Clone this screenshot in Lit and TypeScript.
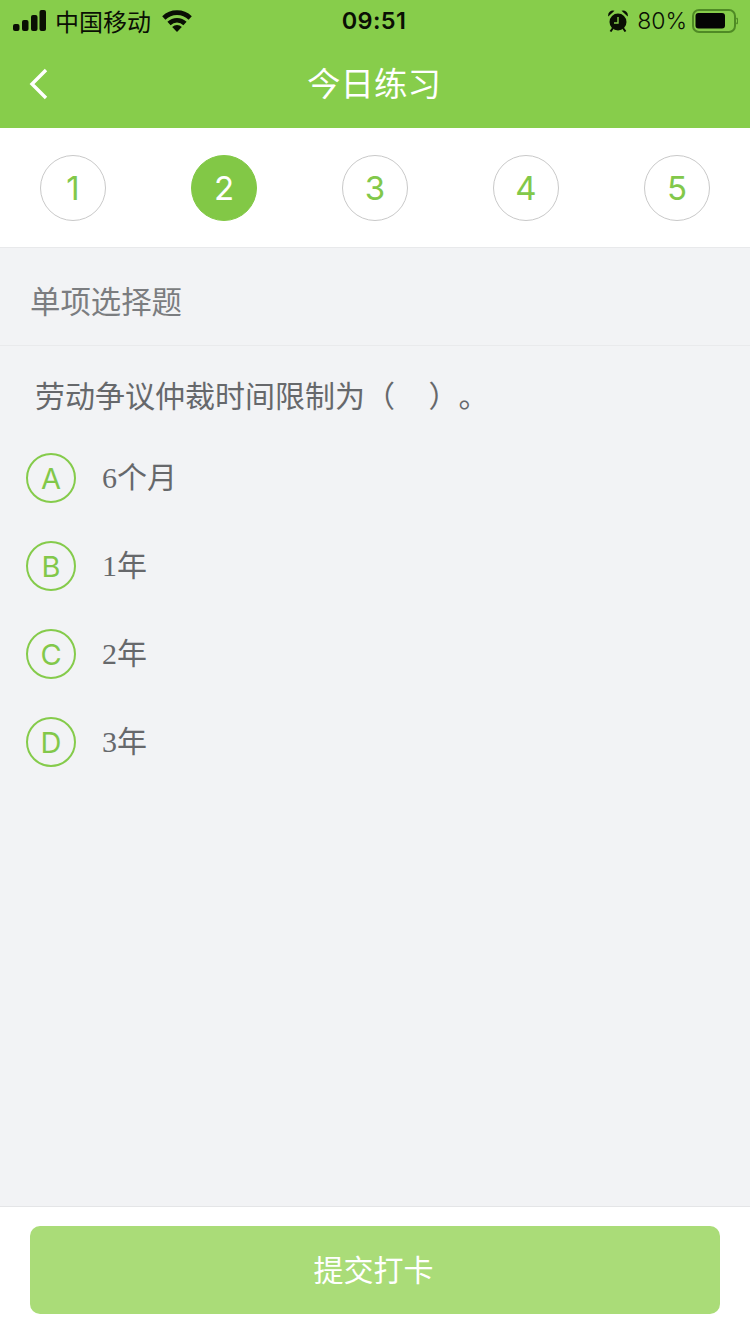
import { LitElement, html, css } from "lit";
import { customElement } from "lit/decorators.js";

@customElement("app-root")
export class AppRoot extends LitElement {
  static styles = css`
    :host { display: flex; flex-direction: column; height: 1334px; width: 750px; background: #f2f3f5; font-family: "Noto Sans CJK SC", sans-serif; overflow: hidden; }
    .head { background: #87cd4b; height: 128px; flex: none; display: flex; flex-direction: column; }
    .status { height: 40px; display: grid; grid-template-columns: 1fr auto 1fr; align-items: center; color: #0a0f04; padding: 0 12px 0 13px; }
    .left, .right { display: flex; align-items: center; }
    .right { justify-content: flex-end; }
    .carrier { font-size: 24px; line-height: 40px; margin-left: 9px; }
    .wifi { margin-left: 11px; }
    .time { font-family: "Inter", "Liberation Sans", sans-serif; font-size: 23.5px; font-weight: 600; line-height: 42px; letter-spacing: 0.4px; margin-left: -3px; }
    .pct { font-family: "Inter", "Liberation Sans", sans-serif; font-size: 23px; font-weight: 350; line-height: 41px; margin: 0 5px 0 9px; }
    .nav { flex: 1; display: flex; align-items: center; justify-content: center; position: relative; color: #fff; font-size: 33.5px; padding: 0 2px 5px 0; }
    .back { position: absolute; left: 29px; top: 28px; }
    .steps { flex: none; height: 119px; background: #fff; border-bottom: 1px solid #e8e9eb; display: flex; justify-content: space-between; align-items: center; padding: 0 40px; }
    .step { width: 66px; height: 66px; box-sizing: border-box; border-radius: 50%; border: 1px solid #c9c9c9; color: #82c84a; display: flex; align-items: center; justify-content: center; font-size: 33px; font-weight: 400; font-family: "Inter", "Liberation Sans", sans-serif; }
    .step.on { background: #82c846; border-color: #82c846; color: #fff; }
    .section { flex: none; height: 98px; box-sizing: border-box; border-bottom: 1px solid #e9eaec; padding: 6px 30px 0; display: flex; align-items: center; font-size: 30.4px; color: #7b7d80; }
    .main { flex: 1; display: flex; flex-direction: column; }
    .q { font-size: 30px; line-height: 42px; color: #66686b; padding: 27px 0 0 35px; white-space: pre; text-spacing-trim: space-all; }
    .opts { display: flex; flex-direction: column; gap: 38px; padding: 38px 0 0 26px; }
    .opt { display: flex; align-items: center; gap: 26px; height: 50px; }
    .mark { width: 50px; height: 50px; box-sizing: border-box; border: 2px solid #85cb4b; border-radius: 50%; color: #82c84a; display: flex; align-items: center; justify-content: center; font-size: 29px; font-weight: 400; font-family: "Inter", "Liberation Sans", sans-serif; padding-top: 1px; }
    .txt { font-family: "Liberation Serif", "Noto Sans CJK SC", serif; font-size: 30px; color: #66686b; line-height: 50px; }
    .foot { flex: none; height: 128px; box-sizing: border-box; background: #fff; border-top: 1px solid #e4e5e7; padding: 19px 30px 0; }
    .btn { height: 88px; box-sizing: border-box; padding: 0 3px 4px 0; border-radius: 10px; background: #aadc78; color: #fff; display: flex; align-items: center; justify-content: center; font-size: 30px; }
  `;

  render() {
    const steps = [1, 2, 3, 4, 5];
    const opts = [["A", "6个月"], ["B", "1年"], ["C", "2年"], ["D", "3年"]];
    return html`
      <div class="head">
        <div class="status">
          <div class="left">
            <svg width="33" height="21" viewBox="0 0 33 21" fill="#0a0f04" style="margin-top:-1px">
              <rect x="0" y="14" width="6.500" height="7" rx="2"/>
              <rect x="9" y="10" width="6.500" height="11" rx="2"/>
              <rect x="18" y="5" width="6.500" height="16" rx="2"/>
              <rect x="26.500" y="0" width="6.500" height="21" rx="2"/>
            </svg>
            <span class="carrier">中国移动</span>
            <svg class="wifi" width="30" height="22" viewBox="0 0 30 22">
              <path d="M1.800 8 A19 19 0 0 1 28.200 8" fill="none" stroke="#0a0f04" stroke-width="4.600"/>
              <path d="M7 13.500 A11.500 11.500 0 0 1 23 13.500" fill="none" stroke="#0a0f04" stroke-width="4.600"/>
              <path d="M10.200 17 A7 7 0 0 1 19.800 17 L15 22 Z" fill="#0a0f04"/>
            </svg>
          </div>
          <div class="time">09:51</div>
          <div class="right">
            <svg width="20" height="22" viewBox="0 0 20 22">
              <circle cx="10" cy="12" r="8.500" fill="#0a0f04"/>
              <path d="M10 7 V13 H6" fill="none" stroke="#87cd4b" stroke-width="1.400"/>
              <path d="M0.300 6.500 A4.800 4.800 0 0 1 6.500 0.800 Z M19.700 6.500 A4.800 4.800 0 0 0 13.500 0.800 Z" fill="#0a0f04"/>
              <path d="M5 18 L2.500 21.500 M15 18 L17.500 21.500" stroke="#0a0f04" stroke-width="2"/>
            </svg>
            <span class="pct">80%</span>
            <svg width="46" height="24" viewBox="0 0 46 24">
              <rect x="1" y="1" width="42" height="22" rx="6" fill="none" stroke="#4f8a25" stroke-width="2"/>
              <rect x="3.500" y="4" width="29.500" height="15.500" rx="3" fill="#050505"/>
              <path d="M44.500 9 A4 4 0 0 1 44.500 15" fill="none" stroke="#4f8a25" stroke-width="1.500"/>
            </svg>
          </div>
        </div>
        <div class="nav">
          <svg class="back" width="20" height="32" viewBox="0 0 20 32">
            <path d="M17 2 L3 16 L17 30" fill="none" stroke="#fff" stroke-width="3.400"/>
          </svg>
          今日练习
        </div>
      </div>
      <div class="steps">
        ${steps.map((n) => html`<div class="step ${n === 2 ? "on" : ""}">${n}</div>`)}
      </div>
      <div class="section">单项选择题</div>
      <div class="main">
        <div class="q">劳动争议仲裁时间限制为（     ）。</div>
        <div class="opts">
          ${opts.map(([k, t]) => html`<div class="opt"><div class="mark">${k}</div><div class="txt">${t}</div></div>`)}
        </div>
      </div>
      <div class="foot"><div class="btn">提交打卡</div></div>
    `;
  }
}
